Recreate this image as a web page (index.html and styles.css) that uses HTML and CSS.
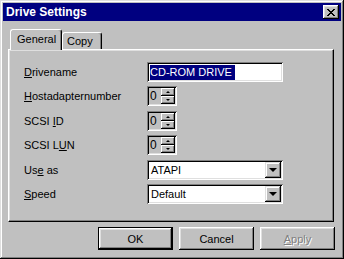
FILE: index.html
```html
<!DOCTYPE html>
<html lang="en">
<head>
  <meta charset="UTF-8" />
  <title>Drive Settings</title>
  <link rel="stylesheet" href="styles.css">
</head>
<body>
  <div class="window">
    <div class="titlebar">
      <span class="title">Drive Settings</span>
      <button class="close" aria-label="Close">
        <svg width="8" height="7" viewBox="0 0 8 7">
          <path d="M0 0h2v1h1v1h2v-1h1v-1h2v1h-1v1h-1v1h-1v1h1v1h1v1h1v1h-2v-1h-1v-1h-2v1h-1v1h-2v-1h1v-1h1v-1h1v-1h-1v-1h-1v-1h-1z" fill="#000"/>
        </svg>
      </button>
    </div>

    <div class="tabs">
      <div class="tab active">General</div>
      <div class="tab">Copy</div>
    </div>

    <div class="panel">
      <div class="form">
        <label><u>D</u>rivename</label>
        <div class="edit"><span class="selected">CD-ROM DRIVE</span></div>

        <label><u>H</u>ostadapternumber</label>
        <div class="spin">
          <span class="spin-value">0</span>
          <div class="spin-buttons">
            <span class="spin-btn"><i class="arrow-up"></i></span>
            <span class="spin-btn"><i class="arrow-down"></i></span>
          </div>
        </div>

        <label>SCSI <u>I</u>D</label>
        <div class="spin">
          <span class="spin-value">0</span>
          <div class="spin-buttons">
            <span class="spin-btn"><i class="arrow-up"></i></span>
            <span class="spin-btn"><i class="arrow-down"></i></span>
          </div>
        </div>

        <label>SCSI L<u>U</u>N</label>
        <div class="spin">
          <span class="spin-value">0</span>
          <div class="spin-buttons">
            <span class="spin-btn"><i class="arrow-up"></i></span>
            <span class="spin-btn"><i class="arrow-down"></i></span>
          </div>
        </div>

        <label>Us<u>e</u> as</label>
        <div class="combo">
          <span class="combo-value">ATAPI</span>
          <span class="combo-btn"><i class="arrow-down big"></i></span>
        </div>

        <label><u>S</u>peed</label>
        <div class="combo">
          <span class="combo-value">Default</span>
          <span class="combo-btn"><i class="arrow-down big"></i></span>
        </div>
      </div>
    </div>

    <div class="buttons">
      <button class="btn default">OK</button>
      <button class="btn">Cancel</button>
      <button class="btn disabled"><u>A</u>pply</button>
    </div>
  </div>
</body>
</html>
```

FILE: styles.css
```css
body {
  margin: 0;
  font-family: 'Liberation Sans', Arial, sans-serif;
  font-size: 11px;
  color: #000;
  background: #c0c0c0;
}
.window {
  width: 344px;
  height: 259px;
  box-sizing: border-box;
  padding: 3px;
  background: #c0c0c0;
  box-shadow: inset -1px -1px #000, inset 1px 1px #dfdfdf, inset -2px -2px #808080, inset 2px 2px #fff;
}
.titlebar {
  height: 18px;
  background: #000080;
  display: flex;
  align-items: center;
  justify-content: space-between;
  padding: 0 2px 0 3px;
}
.title {
  color: #fff;
  font-weight: bold;
  font-size: 12px;
}
.close {
  width: 16px;
  height: 14px;
  padding: 0;
  border: none;
  background: #c0c0c0;
  display: flex;
  align-items: center;
  justify-content: center;
  box-shadow: inset -1px -1px #000, inset 1px 1px #fff, inset -2px -2px #808080, inset 2px 2px #dfdfdf;
}

/* tabs */
.tabs {
  display: flex;
  align-items: flex-end;
  height: 20px;
  margin-top: 8px;
  padding-left: 7px;
}
.tab {
  position: relative;
  height: 17px;
  line-height: 16px;
  box-sizing: border-box;
  padding: 0 7px;
  border: 1px solid;
  border-color: #fff #000 transparent #fff;
  border-bottom: none;
  border-radius: 3px 3px 0 0;
  box-shadow: inset -1px 0 #808080;
  background: #c0c0c0;
}
.tab.active {
  height: 21px;
  line-height: 19px;
  width: 52px;
  padding: 0 6px;
  margin-bottom: -1px;
  z-index: 1;
}
.tab + .tab {
  width: 40px;
  padding: 0 4px;
  border-left-color: #fff;
}

/* panel */
.panel {
  margin: 0 7px 0 5px;
  height: 173px;
  box-sizing: border-box;
  border: 1px solid;
  border-color: #fff #000 #000 #fff;
  box-shadow: inset -1px -1px #808080, inset 1px 1px #dfdfdf;
}
.form {
  display: grid;
  grid-template-columns: 123px 136px;
  grid-auto-rows: 20px;
  row-gap: 4.4px;
  padding: 12px 0 0 15px;
}
.form label {
  line-height: 20px;
  white-space: pre;
}

/* sunken fields */
.edit, .spin, .combo {
  box-sizing: border-box;
  height: 20px;
  padding: 2px;
  box-shadow: inset 1px 1px #808080, inset -1px -1px #fff, inset 2px 2px #000, inset -2px -2px #dfdfdf;
}
.edit {
  background: #fff;
  display: flex;
  align-items: center;
  padding-left: 3px;
}
.selected {
  background: #000080;
  color: #fff;
  height: 15px;
  line-height: 15px;
  padding-right: 3px;
}
.spin {
  width: 30px;
  display: flex;
  background: #c0c0c0;
}
.spin-value {
  flex: 1;
  font-size: 12px;
  line-height: 16px;
  padding-left: 1px;
}
.spin-buttons {
  width: 14px;
  display: flex;
  flex-direction: column;
}
.spin-btn {
  flex: 1;
  display: flex;
  align-items: center;
  justify-content: center;
  box-shadow: inset -1px -1px #000, inset 1px 1px #fff, inset -2px -2px #808080;
}
.arrow-up, .arrow-down {
  width: 0;
  height: 0;
  border-left: 2px solid transparent;
  border-right: 2px solid transparent;
}
.arrow-up {
  border-bottom: 2px solid #000;
}
.arrow-down {
  border-top: 2px solid #000;
}
.arrow-down.big {
  border-left-width: 4px;
  border-right-width: 4px;
  border-top-width: 4px;
  margin-top: 1px;
}
.combo {
  background: #fff;
  display: flex;
  align-items: center;
}
.combo-value {
  flex: 1;
  padding-left: 2px;
}
.combo-btn {
  width: 16px;
  height: 16px;
  background: #c0c0c0;
  display: flex;
  align-items: center;
  justify-content: center;
  box-shadow: inset -1px -1px #000, inset 1px 1px #dfdfdf, inset -2px -2px #808080, inset 2px 2px #fff;
}

/* buttons */
.buttons {
  display: flex;
  justify-content: flex-end;
  gap: 6px;
  margin-top: 5px;
  padding-right: 6px;
}
.btn {
  width: 75px;
  height: 23px;
  border: none;
  padding: 0;
  background: #c0c0c0;
  font-family: 'Liberation Sans', Arial, sans-serif;
  font-size: 11px;
  color: #000;
  box-shadow: inset -1px -1px #000, inset 1px 1px #fff, inset -2px -2px #808080, inset 2px 2px #dfdfdf;
}
.btn.default {
  box-shadow: inset 0 0 0 1px #000, inset -2px -2px #000, inset 2px 2px #fff, inset -3px -3px #808080, inset 3px 3px #dfdfdf;
}
.btn.disabled {
  color: #808080;
  text-shadow: 1px 1px #fff;
}
```
